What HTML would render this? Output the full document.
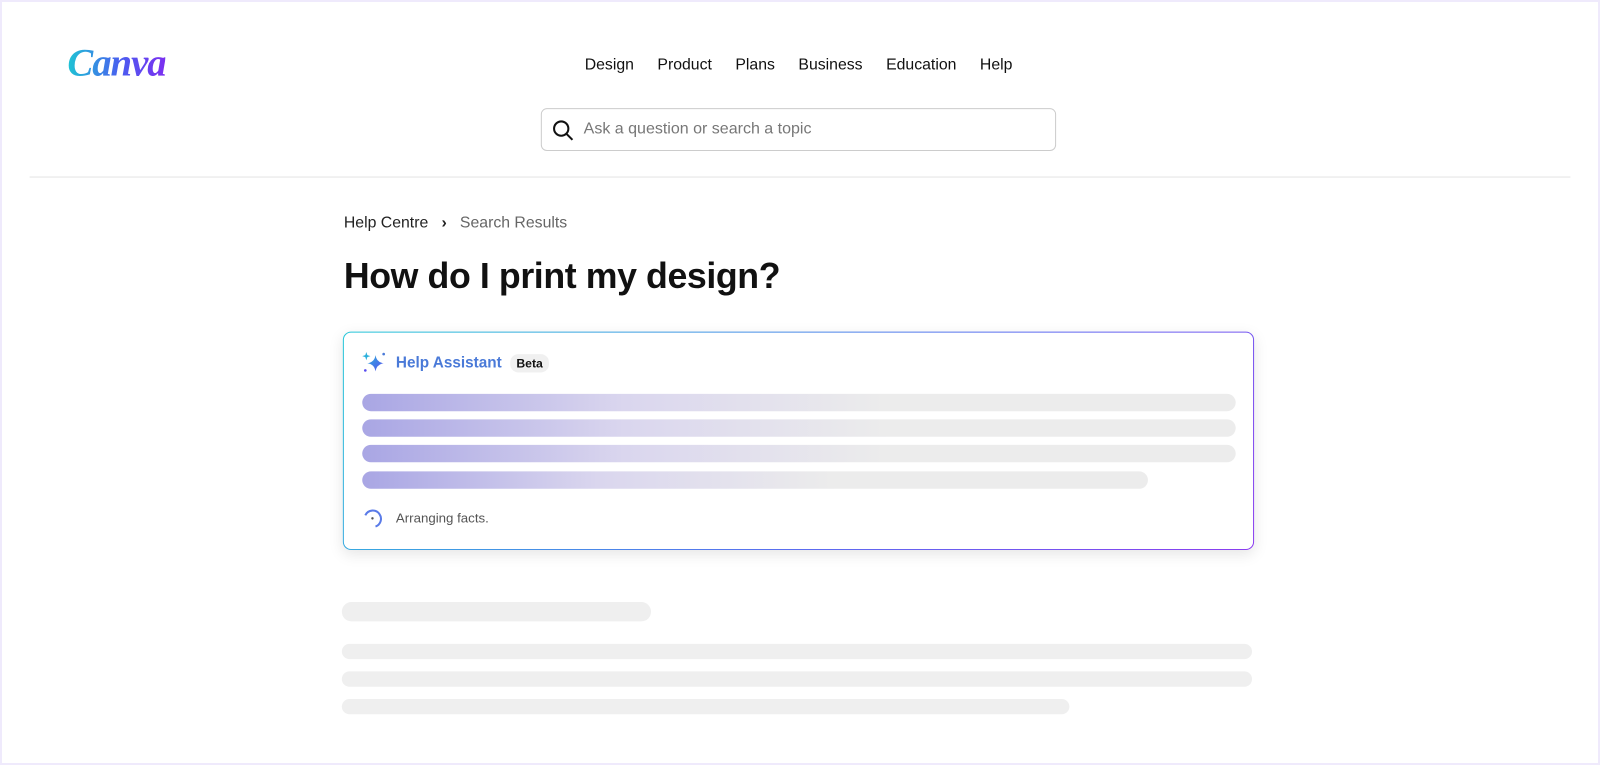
<!DOCTYPE html>
<html><head><meta charset="utf-8"><style>
*{margin:0;padding:0;box-sizing:border-box}
body{width:1600px;height:765px;background:#efeafc;font-family:"Liberation Sans",sans-serif;overflow:hidden}
.page{position:absolute;left:2px;top:2px;width:1596px;height:761px;background:#fff;overflow:hidden}
.w{position:absolute;left:-2px;top:-2px;width:1568px;height:750px;transform:scale(1.0204);transform-origin:0 0}
.logo{position:absolute;left:66px;top:40px;font-family:"Liberation Serif",serif;font-style:italic;font-weight:bold;font-size:38px;background:linear-gradient(90deg,#1ec4d4,#4b5cf0 55%,#7b2ff0);-webkit-background-clip:text;color:transparent;letter-spacing:-1px}
.nav{position:absolute;top:55px;left:573px;font-size:15.5px;color:#111;display:flex;gap:23px}
.search{position:absolute;left:530px;top:106px;width:505px;height:42px;border:1px solid #ccc;border-radius:6px}
.search span{position:absolute;left:41px;top:11px;font-size:15.7px;color:#777}
.hr{position:absolute;left:29px;top:173px;width:1510px;height:1px;background:#e4e4e4}
.bc{position:absolute;left:337px;top:210px;font-size:15.5px;color:#222}
.bc .s{color:#666}
h1{position:absolute;left:337px;top:251px;font-size:35px;font-weight:bold;color:#111;letter-spacing:-0.4px}
.card{position:absolute;left:336px;top:325px;width:893px;height:214px;border-radius:8px;padding:1px;background:linear-gradient(135deg,#25c6d8,#5b6cf0 60%,#8b3df0);box-shadow:0 4px 14px rgba(0,0,0,.1)}
.ci{width:100%;height:100%;background:#fff;border-radius:7px;position:relative}
.ha{position:absolute;left:51px;top:21px;font-size:15px;font-weight:bold;color:#4a7ad8}
.beta{position:absolute;left:163px;top:21px;background:#f0f0f0;border-radius:8px;font-size:12px;font-weight:bold;padding:2px 6px;color:#111}
.bar{position:absolute;left:18px;height:17px;border-radius:9px;background:linear-gradient(90deg,#a9a6e4,#dad6ee 30%,#ececec 60%)}
.arr{position:absolute;left:51px;top:174px;font-size:13px;color:#555}
.g{position:absolute;background:#efefef;border-radius:10px}
</style></head><body><div class="page"><div class="w">
<div class="logo">Canva</div>
<div class="nav"><span>Design</span><span>Product</span><span>Plans</span><span>Business</span><span>Education</span><span>Help</span></div>
<div class="search"><svg style="position:absolute;left:10px;top:10px" width="22" height="22" viewBox="0 0 22 22"><circle cx="9" cy="9" r="7" fill="none" stroke="#111" stroke-width="2"/><line x1="14" y1="14" x2="20" y2="20" stroke="#111" stroke-width="2"/></svg><span>Ask a question or search a topic</span></div>
<div class="hr"></div>
<div class="bc">Help Centre &nbsp;&nbsp;<b>›</b>&nbsp;&nbsp;&nbsp;<span class="s">Search Results</span></div>
<h1>How do I print my design?</h1>
<div class="card"><div class="ci">
<svg style="position:absolute;left:18px;top:18px" width="24" height="22" viewBox="0 0 24 22"><defs><linearGradient id="sg" x1="0" y1="0" x2="1" y2="1"><stop offset="0" stop-color="#2bb0dc"/><stop offset="1" stop-color="#5a4ef0"/></linearGradient></defs><path d="M13 4 Q14 11 21 12 Q14 13 13 20 Q12 13 5 12 Q12 11 13 4Z" fill="url(#sg)"/><path d="M4 1 L5 4 L8 5 L5 6 L4 9 L3 6 L0 5 L3 4Z" fill="#2bb0dc"/><circle cx="21" cy="3" r="1.3" fill="#4a7ad8"/><circle cx="3" cy="19" r="1.3" fill="#5a4ef0"/></svg>
<div class="ha">Help Assistant</div><div class="beta">Beta</div>
<div class="bar" style="top:60px;width:856px"></div>
<div class="bar" style="top:85px;width:856px"></div>
<div class="bar" style="top:110px;width:856px"></div>
<div class="bar" style="top:136px;width:770px"></div>
<svg style="position:absolute;left:19px;top:172px" width="22" height="20" viewBox="0 0 22 20"><path d="M2 7 A8 8 0 0 1 16 6 A8 8 0 0 1 12 18" fill="none" stroke="#5a7be8" stroke-width="2"/><circle cx="9" cy="10" r="1.2" fill="#555"/></svg>
<div class="arr">Arranging facts.</div>
</div></div>
<div class="g" style="left:335px;top:590px;width:303px;height:19px"></div>
<div class="g" style="left:335px;top:631px;width:892px;height:15px"></div>
<div class="g" style="left:335px;top:658px;width:892px;height:15px"></div>
<div class="g" style="left:335px;top:685px;width:713px;height:15px"></div>
</div></div></body></html>
